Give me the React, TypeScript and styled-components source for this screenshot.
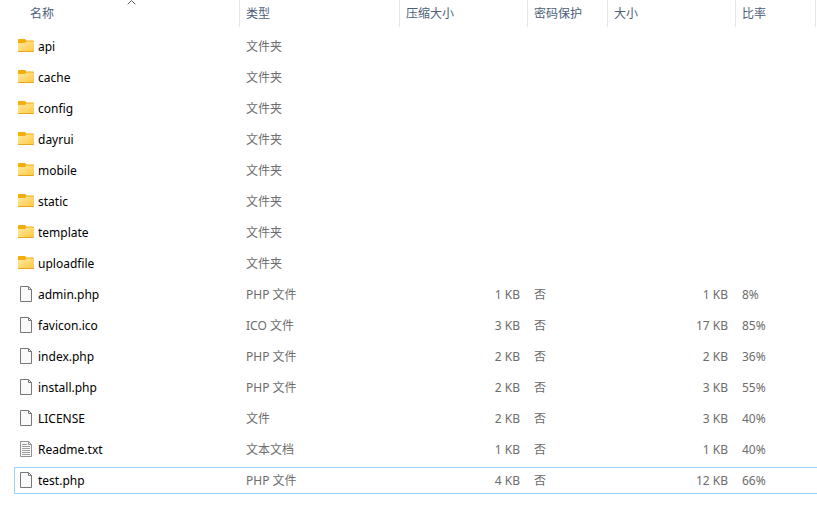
import React, { useState } from "react";
import styled, { createGlobalStyle, css } from "styled-components";

const GlobalStyle = createGlobalStyle`
  body {
    margin: 0;
    background: #fff;
    font-family: "Noto Sans", "Noto Sans CJK SC", sans-serif;
    font-size: 12px;
    line-height: 18px;
    color: #6d6d6d;
  }
`;

const FileTable = styled.table`
  width: 100%;
  table-layout: fixed;
  border-collapse: collapse;
`;

const Column = styled.col<{ $width?: number }>`
  width: ${(p) => (p.$width ? `${p.$width}px` : "auto")};
`;

const HeaderCell = styled.th`
  padding: 0 0 4px;
  font-weight: 400;
  text-align: left;
`;

const HeaderButton = styled.button<{ $first?: boolean }>`
  position: relative;
  display: block;
  box-sizing: border-box;
  width: ${(p) => (p.$first ? "calc(100% - 24px)" : "100%")};
  height: 27px;
  margin: 0 0 0 ${(p) => (p.$first ? 24 : 0)}px;
  padding: 1px 6px 0;
  border: 0;
  border-right: 1px solid #e5e5e5;
  background: none;
  color: #4c607a;
  font: inherit;
  text-align: left;
  white-space: nowrap;
`;

const SortMark = styled.svg`
  position: absolute;
  top: 0;
  left: 50%;
  margin-left: -5px;
`;

const BodyCell = styled.td`
  padding: 2px 0;
`;

const CellBox = styled.div<{ $focused: boolean; $first?: boolean; $right?: boolean }>`
  display: flex;
  align-items: center;
  box-sizing: border-box;
  height: 27px;
  padding: 0 ${(p) => (p.$right ? 8 : 6)}px;
  justify-content: ${(p) => (p.$right ? "flex-end" : "flex-start")};
  border: 0 solid ${(p) => (p.$focused ? "#99d1ff" : "transparent")};
  border-width: 1px 0;
  white-space: nowrap;
  ${(p) =>
    p.$first &&
    css`
      gap: 4px;
      margin-left: 14px;
      padding: 0 3px;
      border-left-width: 1px;
      border-radius: 1px 0 0 1px;
      color: #000;
    `}
`;

const Glyph = styled.svg`
  flex: none;
  display: block;
  margin-bottom: 1px;
`;

type Kind = "folder" | "file" | "text";

function FolderIcon() {
  return (
    <Glyph width="16" height="16" viewBox="0 0 16 16" aria-hidden="true">
      <defs>
        <linearGradient id="folderFront" x1="0" y1="0" x2="1" y2="1">
          <stop offset="0" stopColor="#ffe9a3" />
          <stop offset="1" stopColor="#ffc83d" />
        </linearGradient>
      </defs>
      <path d="M0 2Q0 1 1 1H7L8.5 2.5H15Q16 2.5 16 3.5V7H0Z" fill="#f5ad0b" />
      <path d="M0 5H6.8L8.6 3.6H15.3Q16 3.6 16 4.3V13Q16 14 15 14H1Q0 14 0 13Z" fill="url(#folderFront)" />
      <path d="M0 13H16Q16 14 15 14H1Q0 14 0 13Z" fill="#e9a51c" />
    </Glyph>
  );
}

function PageIcon({ lined }: { lined?: boolean }) {
  const stroke = lined ? "#929292" : "#777777";
  return (
    <Glyph width="16" height="16" viewBox="0 0 16 16" aria-hidden="true">
      <path d="M2.5 .5H10.5L13.5 3.5V15.5H2.5Z" fill="#fafafa" stroke={stroke} />
      <path d="M10.5 .5V3.5H13.5" fill="none" stroke={stroke} />
      {lined && <path d="M4 3.5H9M4 5.5H12M4 7.5H12M4 9.5H12M4 11.5H12M4 13.5H12" stroke="#a0a0a0" />}
    </Glyph>
  );
}

interface Entry {
  name: string;
  type: string;
  kind: Kind;
  packed?: string;
  size?: string;
  ratio?: string;
}

const folder = (name: string): Entry => ({ name, type: "文件夹", kind: "folder" });
const file = (name: string, type: string, packed: string, size: string, ratio: string, kind: Kind = "file"): Entry => ({
  name,
  type,
  kind,
  packed,
  size,
  ratio,
});

const entries: Entry[] = [
  folder("api"),
  folder("cache"),
  folder("config"),
  folder("dayrui"),
  folder("mobile"),
  folder("static"),
  folder("template"),
  folder("uploadfile"),
  file("admin.php", "PHP 文件", "1 KB", "1 KB", "8%"),
  file("favicon.ico", "ICO 文件", "3 KB", "17 KB", "85%"),
  file("index.php", "PHP 文件", "2 KB", "2 KB", "36%"),
  file("install.php", "PHP 文件", "2 KB", "3 KB", "55%"),
  file("LICENSE", "文件", "2 KB", "3 KB", "40%"),
  file("Readme.txt", "文本文档", "1 KB", "1 KB", "40%", "text"),
  file("test.php", "PHP 文件", "4 KB", "12 KB", "66%"),
];

const columns = [
  { label: "名称", width: 240 },
  { label: "类型", width: 160 },
  { label: "压缩大小", width: 128 },
  { label: "密码保护", width: 80 },
  { label: "大小", width: 128 },
  { label: "比率", width: 80 },
];

export default function App() {
  const [focused, setFocused] = useState("test.php");

  return (
    <>
      <GlobalStyle />
      <FileTable>
        <colgroup>
          {columns.map((c) => (
            <Column key={c.label} $width={c.width} />
          ))}
          <Column />
        </colgroup>
        <thead>
          <tr>
            {columns.map((c, i) => (
              <HeaderCell key={c.label} scope="col" aria-sort={i === 0 ? "ascending" : undefined}>
                <HeaderButton type="button" $first={i === 0}>
                  {c.label}
                  {i === 0 && (
                    <SortMark width="9" height="5" viewBox="0 0 9 5" aria-hidden="true">
                      <path d="M.7 4.3L4.5 .5L8.3 4.3" fill="none" stroke="#5c5c5c" />
                    </SortMark>
                  )}
                </HeaderButton>
              </HeaderCell>
            ))}
            <td />
          </tr>
        </thead>
        <tbody>
          {entries.map((e) => {
            const on = e.name === focused;
            return (
              <tr key={e.name} onClick={() => setFocused(e.name)}>
                <BodyCell>
                  <CellBox $focused={on} $first>
                    {e.kind === "folder" ? <FolderIcon /> : <PageIcon lined={e.kind === "text"} />}
                    <span>{e.name}</span>
                  </CellBox>
                </BodyCell>
                <BodyCell>
                  <CellBox $focused={on}>{e.type}</CellBox>
                </BodyCell>
                <BodyCell>
                  <CellBox $focused={on} $right>{e.packed}</CellBox>
                </BodyCell>
                <BodyCell>
                  <CellBox $focused={on}>{e.packed && "否"}</CellBox>
                </BodyCell>
                <BodyCell>
                  <CellBox $focused={on} $right>{e.size}</CellBox>
                </BodyCell>
                <BodyCell>
                  <CellBox $focused={on}>{e.ratio}</CellBox>
                </BodyCell>
                <BodyCell>
                  <CellBox $focused={on} />
                </BodyCell>
              </tr>
            );
          })}
        </tbody>
      </FileTable>
    </>
  );
}
